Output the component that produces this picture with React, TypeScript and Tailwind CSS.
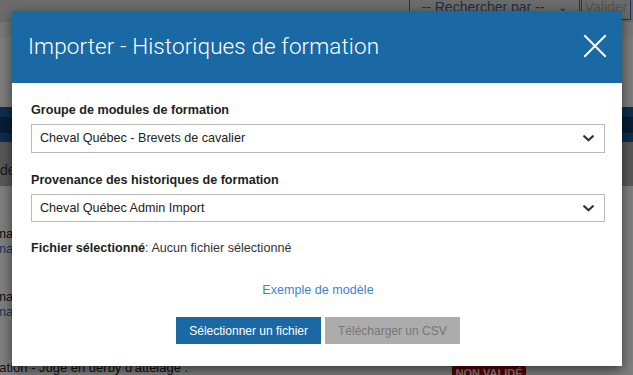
import React from "react";

function Chevron() {
  return (
    <svg width="11" height="7" viewBox="0 0 11 7" className="shrink-0">
      <path d="M1.2 1.2 L5.5 5.3 L9.8 1.2" fill="none" stroke="#333" strokeWidth="2.2" strokeLinecap="round" strokeLinejoin="round" />
    </svg>
  );
}

function SelectBox({ value, h }: { value: string; h: string }) {
  return (
    <div className={`flex items-center justify-between border border-[#b9b9b9] bg-white pl-[8px] pr-[10px] ${h}`}>
      <span className="text-[12.6px] text-[#222]">{value}</span>
      <Chevron />
    </div>
  );
}

export default function App() {
  return (
    <div className="relative w-[633px] h-[375px] overflow-hidden bg-white font-['Helvetica_Neue','Liberation_Sans',Arial,sans-serif]">
      {/* background page */}
      <div className="flex flex-col h-full">
        <div className="shrink-0 h-[22px] bg-[#d8d8d8] flex justify-end items-start">
          <div className="mt-[-6px] h-[26px] w-[171px] border border-[#3a6ea5] flex items-center justify-center gap-[14px] text-[14px] text-[#3a5f8a]">
            <span>-- Rechercher par --</span>
            <span className="text-[11px]">⌄</span>
          </div>
          <div className="mt-[-6px] ml-[1px] mr-[2px] h-[26px] w-[50px] border border-[#3a6ea5] flex items-center justify-center text-[14px] text-[#aaa]">
            Valider
          </div>
        </div>
        <div className="shrink-0 h-[15px] bg-[#f0f0f0]" />
        <div className="shrink-0 h-[70px] bg-[#fafafa]" />
        <div className="shrink-0 h-[10px] bg-[#1c5a9a]" />
        <div className="shrink-0 h-[16px] bg-[#103c6a]" />
        <div className="shrink-0 h-[9px] bg-[#1c5a9a]" />
        <div className="shrink-0 h-[44px] bg-[#b0b0b0] pt-[21px] text-[14px] leading-[15px] text-[#333]">de</div>
        <div className="flex-1 bg-white relative text-[13px] leading-[15px]">
          <div className="ml-[-20px] mt-[40px] text-[#222]">formation - Test</div>
          <div className="ml-[-20px] text-[#2f6fb0]">formation - Test</div>
          <div className="ml-[-20px] mt-[33px] text-[#222]">formation - Test</div>
          <div className="ml-[-20px] text-[#2f6fb0]">formation - Test</div>
          <div className="ml-[-8px] mt-[41px] text-[#222]">nation - Juge en derby d'attelage :</div>
          <div className="absolute left-[452px] top-[177px] w-[74px] h-[20px] rounded-[5px] bg-[#b00000] text-white text-[11px] font-bold flex items-center justify-center">
            NON VALIDÉ
          </div>
        </div>
      </div>

      {/* overlay */}
      <div className="absolute inset-0 bg-black/50" />

      {/* modal */}
      <div className="absolute left-[12px] top-[11px] w-[610px] bg-white shadow-[0_4px_12px_rgba(0,0,0,0.55)]">
        <div className="h-[72px] bg-[#1a69a4] flex items-center justify-between pl-[16px] pr-[15px]">
          <h1 className="text-[22.5px] font-light text-white font-['Roboto',sans-serif] tracking-[0.1px]">
            Importer - Historiques de formation
          </h1>
          <svg width="24" height="24" viewBox="0 0 24 24" className="mb-[3px]">
            <path d="M2 2 L22 22 M22 2 L2 22" stroke="white" strokeWidth="2" strokeLinecap="square" />
          </svg>
        </div>
        <div className="pl-[19px] pr-[17px] pt-[18px] pb-[22px]">
          <div className="text-[12.6px] font-bold text-[#222] leading-[18px] mb-[5px]">Groupe de modules de formation</div>
          <SelectBox value="Cheval Québec - Brevets de cavalier" h="h-[29px]" />
          <div className="text-[12.6px] font-bold text-[#222] leading-[18px] mt-[18px] mb-[5px]">Provenance des historiques de formation</div>
          <SelectBox value="Cheval Québec Admin Import" h="h-[28px]" />
          <div className="text-[12.6px] text-[#333] leading-[18px] mt-[17px]">
            <span className="font-bold text-[#222]">Fichier sélectionné</span>: Aucun fichier sélectionné
          </div>
          <div className="text-center text-[12.6px] text-[#3d85c6] leading-[18px] mt-[24px]">Exemple de modèle</div>
          <div className="flex justify-center gap-[4px] mt-[18px]">
            <button className="h-[27px] px-[13px] bg-[#1a69a4] text-white text-[12px]">Sélectionner un fichier</button>
            <button className="h-[27px] px-[13px] bg-[#acacac] text-[#777] text-[12px]">Télécharger un CSV</button>
          </div>
        </div>
      </div>
    </div>
  );
}
